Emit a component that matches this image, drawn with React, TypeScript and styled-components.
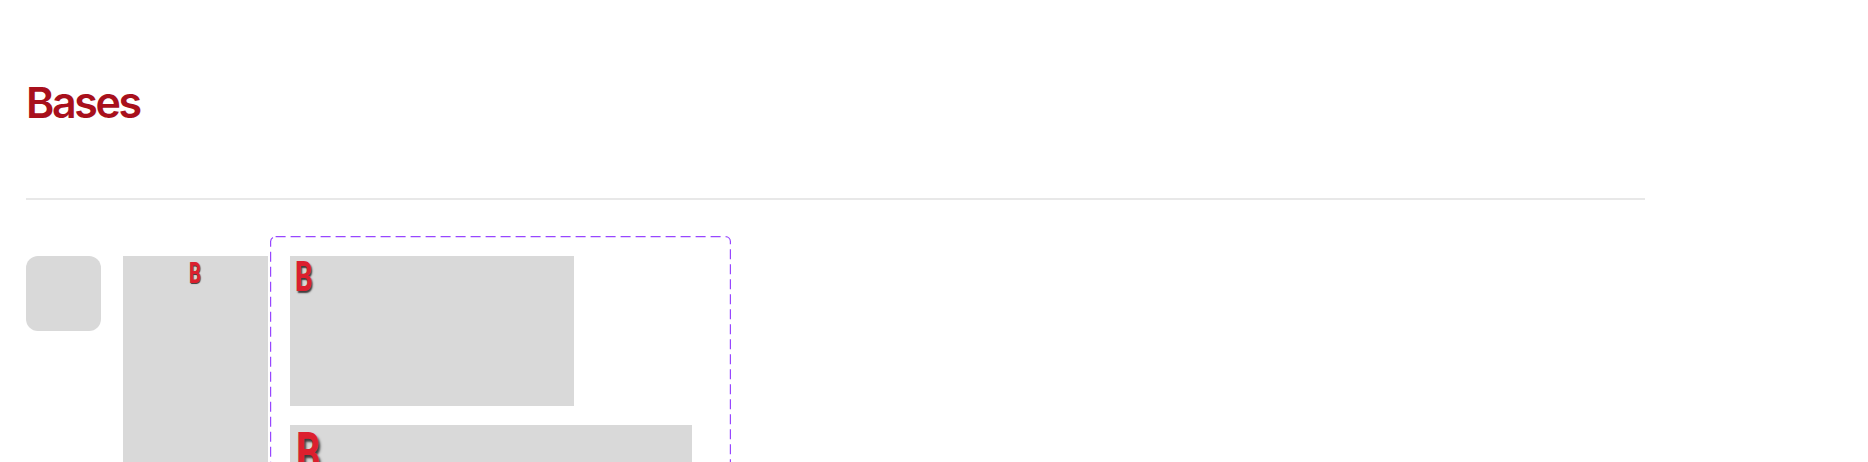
import React from "react";
import styled, { createGlobalStyle } from "styled-components";

const GlobalStyle = createGlobalStyle`
  html, body {
    margin: 0;
    height: 100%;
    overflow: hidden;
    background: #fff;
  }
`;

const Page = styled.main`
  padding: 0 0 0 26px;
  font-family: Inter, "Liberation Sans", sans-serif;
`;

const Title = styled.h1`
  margin: 0;
  padding-top: 78px;
  height: 198px;
  box-sizing: border-box;
  font-size: 43px;
  line-height: 48px;
  font-weight: 600;
  letter-spacing: -2.4px;
  color: #a8101c;
`;

const Rule = styled.hr`
  margin: 0;
  border: 0;
  width: 1619px;
  height: 2px;
  background: #e8e8e8;
`;

const Row = styled.section`
  display: flex;
  align-items: flex-start;
  margin-top: 56px;
`;

const Base = styled.div<{ $w: number; $h: number; $r?: number }>`
  flex: none;
  display: flex;
  width: ${(p) => p.$w}px;
  height: ${(p) => p.$h}px;
  border-radius: ${(p) => p.$r ?? 0}px;
  background: #d9d9d9;
`;

const Icon = styled(Base)`
  margin-right: 22px;
`;

const Tall = styled(Base)`
  margin-right: 2px;
`;

const VariantSet = styled.div`
  position: relative;
  flex: none;
  box-sizing: border-box;
  width: 461px;
  height: 640px;
  margin-top: -20px;
  padding: 20px 0 0 20px;
  display: flex;
  flex-direction: column;
  gap: 19px;
`;

const Frame = styled.svg`
  position: absolute;
  top: 0;
  left: 0;
`;

const Letter = styled.span<{ $size: number; $x: number; $y: number; $shadow: number }>`
  display: block;
  margin: ${(p) => p.$y}px 0 0 ${(p) => p.$x}px;
  height: ${(p) => p.$size}px;
  font-family: Roboto, "Liberation Sans", sans-serif;
  font-weight: 700;
  font-size: ${(p) => p.$size}px;
  line-height: 1;
  color: #dc1f2e;
  text-shadow: ${(p) => p.$shadow}px ${(p) => p.$shadow}px ${(p) => p.$shadow}px #3c3c3c;
  transform: scaleX(0.64);
  transform-origin: 0 0;
`;

export default function App() {
  return (
    <>
      <GlobalStyle />
      <Page>
        <Title>Bases</Title>
        <Rule />
        <Row>
          <Icon $w={75} $h={75} $r={12} />
          <Tall $w={145} $h={300}>
            <Letter $size={29} $x={66} $y={3} $shadow={1}>B</Letter>
          </Tall>
          <VariantSet>
            <Frame width="461" height="640" fill="none">
              <rect x="0.6" y="0.6" width="459.8" height="638.8" rx="5" stroke="#9747ff" strokeWidth="1.2" strokeDasharray="10 5" />
            </Frame>
            <Base $w={284} $h={150}>
              <Letter $size={43} $x={5} $y={-1} $shadow={2}>B</Letter>
            </Base>
            <Base $w={402} $h={212}>
              <Letter $size={60} $x={6} $y={-1} $shadow={3}>B</Letter>
            </Base>
          </VariantSet>
        </Row>
      </Page>
    </>
  );
}
